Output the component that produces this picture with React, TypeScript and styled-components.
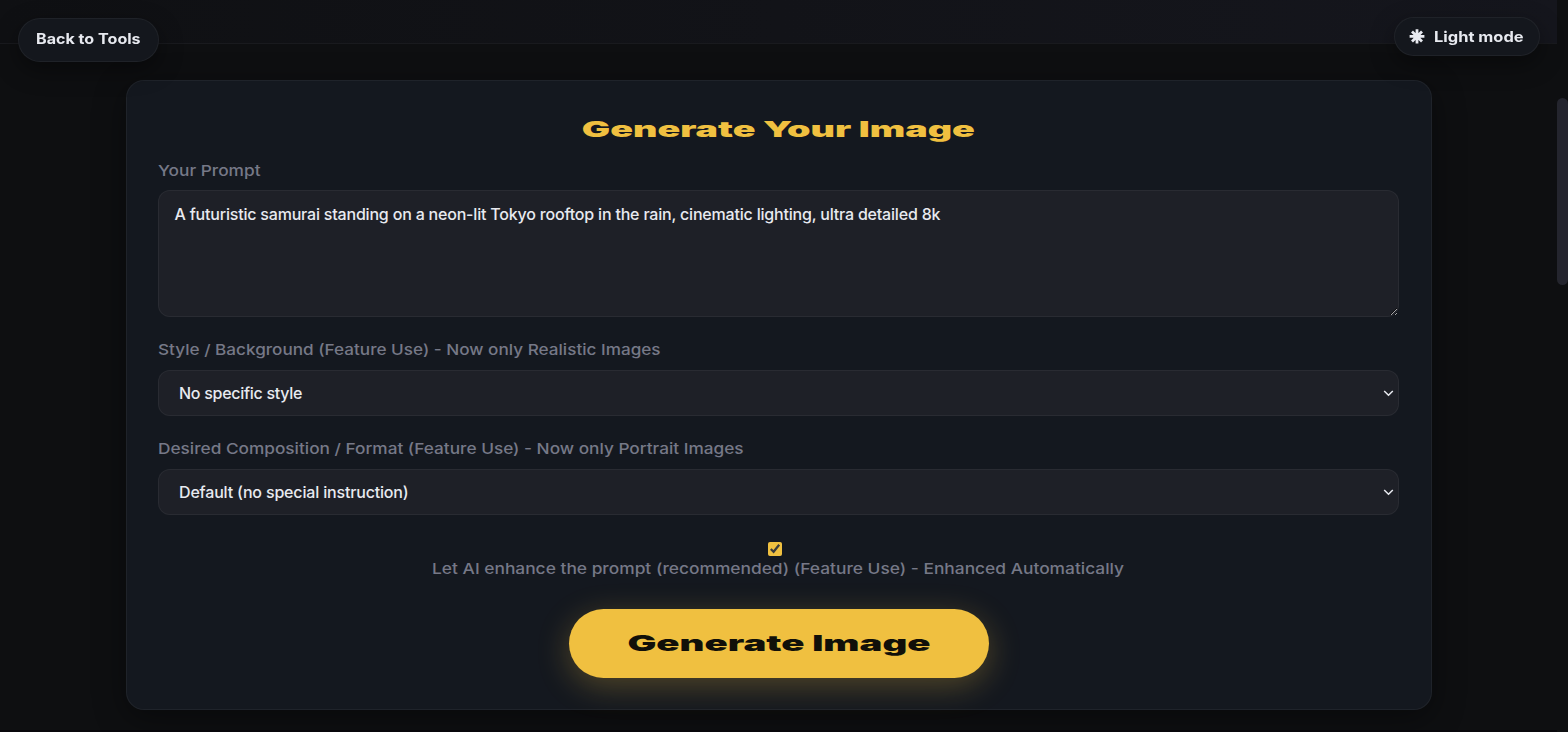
import React from 'react'
import styled, { createGlobalStyle } from 'styled-components'

const GlobalStyle = createGlobalStyle`
  :root {
    --bg: #0e0f11;
    --panel: #14181f;
    --field: #1e2027;
    --line: rgba(255, 255, 255, 0.05);
    --accent: #f0c040;
    --text: #e8eaf0;
    --muted: #767887;
  }
  * {
    box-sizing: border-box;
  }
  body {
    margin: 0;
    background: var(--bg);
    color: var(--text);
    font-family: Inter, sans-serif;
    overflow: hidden;
  }
`

const Page = styled.div`
  display: grid;
  grid-template-columns: 1fr 11px;
  height: 732px;
  overflow: hidden;
`

const Content = styled.div`
  display: flex;
  flex-direction: column;
  align-items: center;
  box-shadow: inset 0 -2px 0 #09080c;
`

const Header = styled.header`
  width: 100%;
  height: 44px;
  flex: none;
  background: linear-gradient(90deg, #0f1013, #15161d);
  border-bottom: 1px solid #191a1e;
`

const ScrollTrack = styled.div`
  padding-top: 98px;
  background: var(--bg);
`

const ScrollThumb = styled.div`
  height: 187px;
  border-radius: 6px;
  background: #24252e;
`

const Pill = styled.button<{ $side: 'left' | 'right' }>`
  position: fixed;
  top: ${p => (p.$side === 'left' ? 18 : 17)}px;
  ${p => (p.$side === 'left' ? 'left: 18px' : 'right: 28px')};
  width: ${p => (p.$side === 'left' ? 141 : 146)}px;
  height: ${p => (p.$side === 'left' ? 44 : 39)}px;
  display: flex;
  align-items: center;
  gap: 9px;
  padding: 0 0 ${p => (p.$side === 'left' ? 3 : 0)}px ${p => (p.$side === 'left' ? 17 : 14)}px;
  border: 1px solid var(--line);
  border-radius: 22px;
  background: #14171d;
  color: var(--text);
  font: 700 14.5px Inter, sans-serif;
  box-shadow: 0 8px 24px rgba(0, 0, 0, 0.4);
`

const Card = styled.main`
  width: 1306px;
  height: 630px;
  margin-top: 36px;
  padding: 31px 31.5px 0;
  display: flex;
  flex-direction: column;
  border: 1px solid var(--line);
  border-radius: 18px;
  background: var(--panel);
  box-shadow: 0 8px 32px rgba(0, 0, 0, 0.4);
`

const Wide = styled.span<{ $x: number; $origin?: string }>`
  display: inline-block;
  white-space: nowrap;
  transform: scaleX(${p => p.$x});
  transform-origin: ${p => p.$origin || 'left'} center;
`

const Title = styled.h1`
  margin: 0;
  height: 37px;
  color: var(--accent);
  font-size: 21.5px;
  font-weight: 900;
  line-height: 34px;
  text-align: center;
`

const Label = styled.label`
  height: 42px;
  color: var(--muted);
  font-size: 15px;
  font-weight: 500;
  line-height: 43px;
`

const Prompt = styled.textarea`
  flex: none;
  width: 1241px;
  height: 127px;
  margin: -1px 0 11px;
  padding: 12px 15.5px;
  border: 1px solid var(--line);
  border-radius: 12px;
  outline: none;
  resize: vertical;
  background: var(--field);
  color: var(--text);
  font: 500 16px/22px Inter, sans-serif;
  letter-spacing: -0.195px;
`

const SelectBox = styled.div`
  position: relative;
  flex: none;
  width: 1241px;
  height: 46px;
  margin-bottom: 11px;

  svg {
    position: absolute;
    top: 19px;
    right: 5px;
    pointer-events: none;
  }
`

const Select = styled.select<{ $spacing: number }>`
  appearance: none;
  width: 100%;
  height: 100%;
  padding: 0 20px 0 20px;
  border: 1px solid var(--line);
  border-radius: 12px;
  background: var(--field);
  color: var(--text);
  font: 500 16px Inter, sans-serif;
  letter-spacing: ${p => p.$spacing}px;
`

const Enhance = styled.label`
  display: flex;
  flex-direction: column;
  align-items: center;
  margin-top: 16px;
  color: var(--muted);
  font-size: 15px;
  font-weight: 500;
  line-height: 22px;
`

const Check = styled.input`
  width: 14px;
  height: 14px;
  margin: 0 8px 2px 0;
  accent-color: var(--accent);
`

const GenerateButton = styled.button`
  align-self: center;
  width: 420px;
  height: 69px;
  margin-top: 29px;
  padding: 0 0 2px;
  border: 0;
  border-radius: 35px;
  background: var(--accent);
  color: #111009;
  font: 900 21.5px Inter, sans-serif;
  box-shadow: 0 8px 32px rgba(240, 192, 64, 0.28);
`

const SunIcon = () => (
  <svg width="16" height="16" viewBox="0 0 16 16" stroke="currentColor" strokeWidth="2.8">
    <path d="M8 .2v14.4M.6 7.4h14.8M3 2.4l10 10M13 2.4l-10 10" />
    <circle cx="8" cy="7.4" r="3.4" fill="currentColor" stroke="none" />
  </svg>
)

const Chevron = () => (
  <svg width="11" height="9" viewBox="0 0 11 9" fill="none" stroke="#e8eaf0" strokeWidth="1.5">
    <path d="M1.2 2l4.3 4.3L9.8 2" />
  </svg>
)

export default function App() {
  return (
    <>
      <GlobalStyle />
      <Page>
        <Content>
          <Header />
          <Card>
            <Title>
              <Wide $x={1.75} $origin="center">Generate Your Image</Wide>
            </Title>
            <Label htmlFor="prompt">
              <Wide $x={1.153}>Your Prompt</Wide>
            </Label>
            <Prompt
              id="prompt"
              spellCheck={false}
              defaultValue="A futuristic samurai standing on a neon-lit Tokyo rooftop in the rain, cinematic lighting, ultra detailed 8k"
            />
            <Label htmlFor="style">
              <Wide $x={1.143}>Style / Background (Feature Use) - Now only Realistic Images</Wide>
            </Label>
            <SelectBox>
              <Select id="style" $spacing={-0.28}>
                <option>No specific style</option>
              </Select>
              <Chevron />
            </SelectBox>
            <Label htmlFor="format">
              <Wide $x={1.149}>Desired Composition / Format (Feature Use) - Now only Portrait Images</Wide>
            </Label>
            <SelectBox>
              <Select id="format" $spacing={-0.17}>
                <option>Default (no special instruction)</option>
              </Select>
              <Chevron />
            </SelectBox>
            <Enhance>
              <Check type="checkbox" defaultChecked />
              <Wide $x={1.157} $origin="center">
                Let AI enhance the prompt (recommended) (Feature Use) - Enhanced Automatically
              </Wide>
            </Enhance>
            <GenerateButton>
              <Wide $x={1.784} $origin="center">Generate Image</Wide>
            </GenerateButton>
          </Card>
        </Content>
        <ScrollTrack>
          <ScrollThumb />
        </ScrollTrack>
      </Page>
      <Pill $side="left">
        <Wide $x={1.11}>Back to Tools</Wide>
      </Pill>
      <Pill $side="right">
        <SunIcon />
        <Wide $x={1.135}>Light mode</Wide>
      </Pill>
    </>
  )
}
